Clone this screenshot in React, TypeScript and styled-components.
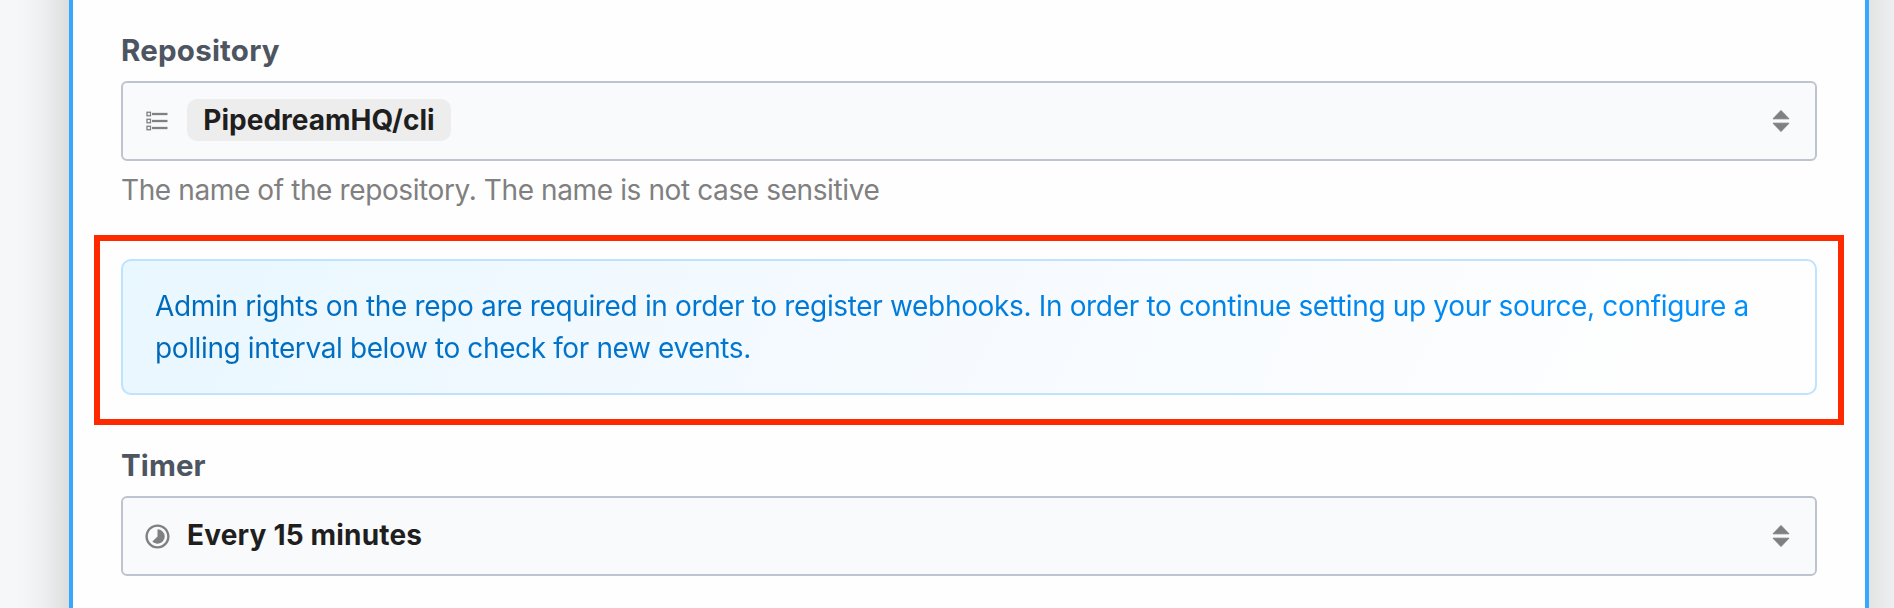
import React from "react";
import styled, { createGlobalStyle } from "styled-components";
import { MdTimelapse } from "react-icons/md";

const GlobalStyle = createGlobalStyle`
  * { box-sizing: border-box; }
  body { margin: 0; overflow: hidden; background: #f6f7f9; font-family: Inter, "Liberation Sans", sans-serif; }
`;

const Page = styled.div`
  display: flex;
  justify-content: flex-start;
  height: 608px;
  padding-left: 69px;
  overflow: hidden;
  background: linear-gradient(90deg, #f7f8fa 0, #f5f6f8 22px, #eeeff1 42px, #e7e8e9 54px, #dcdddc 69px, #e2e3e2 1869px, #eeeff1 1894px);
`;

const Panel = styled.main`
  display: flex;
  flex-direction: column;
  flex: none;
  width: 1800px;
  padding: 32px 21px 0;
  border: solid #36a9ff;
  border-width: 0 4px;
  background: #fefefe;
`;

const Field = styled.section`
  display: flex;
  flex-direction: column;
  padding: 0 27px;
`;

const Label = styled.label`
  height: 49px;
  font-size: 29.5px;
  line-height: 37px;
  font-weight: 700;
  color: #4d5561;
`;

const Text = styled.span<{ $spacing: number }>`
  letter-spacing: ${(p) => p.$spacing}px;
  white-space: nowrap;
`;

const SelectBox = styled.div`
  display: flex;
  align-items: center;
  height: 80px;
  padding: 0 25px 0 22px;
  border: 2px solid #bdc4d0;
  border-radius: 6px;
  background: #f9fafc;
  font-size: 28px;
  line-height: 34px;
  font-weight: 700;
  color: #1f1f1f;
`;

const IconSlot = styled.span`
  display: flex;
  justify-content: center;
  width: 24px;
  margin-right: 18px;
  color: #808080;
  svg { flex: none; }
`;

const Chip = styled.span`
  display: flex;
  align-items: center;
  justify-content: center;
  width: 264px;
  height: 42px;
  margin-bottom: 2px;
  border-radius: 10px;
  background: #ededed;
`;

const Value = styled.span`
  display: flex;
  padding-bottom: 2px;
`;

const Arrows = styled.svg`
  margin-left: auto;
`;

const Help = styled.p`
  height: 74px;
  margin: 0;
  padding-top: 9px;
  font-size: 28px;
  line-height: 40px;
  color: #808080;
`;

const Highlight = styled.div`
  height: 190px;
  padding: 18px 21px;
  border: 6px solid #ff2900;
`;

const Alert = styled.div`
  height: 136px;
  padding: 24px 32px;
  border: 2px solid #bde3ff;
  border-radius: 10px;
  background: linear-gradient(115deg, #e9f7ff, #f5faff 45%, #fefefe 92%);
`;

const AlertText = styled.p`
  display: flex;
  flex-direction: column;
  margin: 0;
  font-size: 28px;
  line-height: 42px;
  color: transparent;
  background: linear-gradient(90deg, #0069b9, #0091ff);
  background-clip: text;
`;

const TimerField = styled(Field)`
  padding-top: 22px;
`;

const ListIcon = () => (
  <svg width="22" height="20" viewBox="0 0 22 20" fill="none" stroke="currentColor">
    {[3, 10, 17].map((y) => (
      <g key={y}>
        <rect x="1" y={y - 1.75} width="3.5" height="3.5" strokeWidth="1.3" />
        <path d={`M6 ${y}H21.5`} strokeWidth="2.3" />
      </g>
    ))}
  </svg>
);

const SortArrows = () => (
  <Arrows width="18" height="24" viewBox="0 0 18 24" fill="#808080" stroke="#808080" strokeLinejoin="round">
    <path d="M9 1.5L17 9.8H1ZM1 14.2H17L9 22.5Z" />
  </Arrows>
);

export default function App() {
  return (
    <>
      <GlobalStyle />
      <Page>
        <Panel>
          <Field>
            <Label><Text $spacing={0.22}>Repository</Text></Label>
            <SelectBox>
              <IconSlot><ListIcon /></IconSlot>
              <Chip><Text $spacing={0}>PipedreamHQ/cli</Text></Chip>
              <SortArrows />
            </SelectBox>
            <Help><Text $spacing={-0.39}>The name of the repository. The name is not case sensitive</Text></Help>
          </Field>
          <Highlight>
            <Alert>
              <AlertText>
                <Text $spacing={-0.34}>Admin rights on the repo are required in order to register webhooks. In order to continue setting up your source, configure a</Text>
                <Text $spacing={-0.38}>polling interval below to check for new events.</Text>
              </AlertText>
            </Alert>
          </Highlight>
          <TimerField>
            <Label><Text $spacing={0.1}>Timer</Text></Label>
            <SelectBox>
              <IconSlot><MdTimelapse size={29} /></IconSlot>
              <Value><Text $spacing={0.18}>Every 15 minutes</Text></Value>
              <SortArrows />
            </SelectBox>
          </TimerField>
        </Panel>
      </Page>
    </>
  );
}
